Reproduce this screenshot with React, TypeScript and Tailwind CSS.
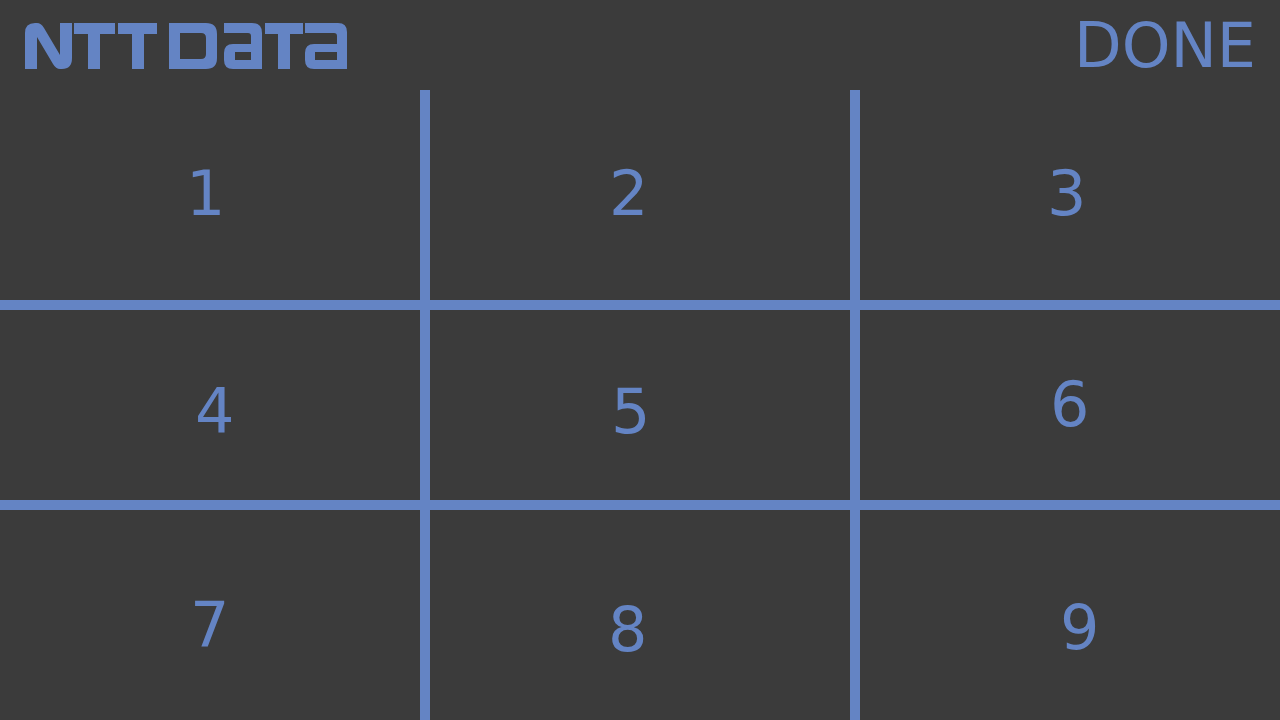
import React from 'react';

const font = "font-['DejaVu_Sans',sans-serif]";

// svg origin sits at page (20,20)
const Logo = () => (
  <svg width="330" height="54" viewBox="0 0 330 54" fill="#6484c4" className="block">
    <path d="M5 49V13Q5 3 15 3H17Q21 3 24 8L40 35V3H52V38Q52 49 42 49H40Q36 49 33 44L17 17V49Z" />
    <path d="M54 3H95V14H80V49H68V14H54Z" />
    <path d="M98 3H137V14H124V49H112V14H98Z" />
    <path fillRule="evenodd" d="M149 3H186Q197 3 197 14V38Q197 49 186 49H149ZM160 13V39H181Q186 39 186 34V18Q186 13 181 13Z" />
    <path fillRule="evenodd" d="M204 3H232Q242 3 242 13V49H213Q204 49 204 40V33Q204 24 213 24H231V16Q231 13 228 13H204ZM215 32V40H231V32Z" />
    <path d="M245 3H283V14H270V49H258V14H245Z" />
    <path fillRule="evenodd" d="M285 3H318Q327 3 327 12V49H294Q285 49 285 40V33Q285 24 294 24H317V16Q317 13 314 13H285ZM295 32V40H317V32Z" />
  </svg>
);

const cells = [
  { label: '1', cls: 'w-[430px] h-[220px] border-r-[10px] border-b-[10px] pl-[186px] pt-[66px]' },
  { label: '2', cls: 'w-[430px] h-[220px] border-r-[10px] border-b-[10px] pl-[179px] pt-[66px]' },
  { label: '3', cls: 'w-[420px] h-[220px] border-b-[10px] pl-[187px] pt-[66px]' },
  { label: '4', cls: 'w-[430px] h-[200px] border-r-[10px] border-b-[10px] pl-[195px] pt-[64px]' },
  { label: '5', cls: 'w-[430px] h-[200px] border-r-[10px] border-b-[10px] pl-[181px] pt-[64px]' },
  { label: '6', cls: 'w-[420px] h-[200px] border-b-[10px] pl-[190px] pt-[57px]' },
  { label: '7', cls: 'w-[430px] h-[210px] border-r-[10px] pl-[190px] pt-[77px]' },
  { label: '8', cls: 'w-[430px] h-[210px] border-r-[10px] pl-[178px] pt-[82px]' },
  { label: '9', cls: 'w-[420px] h-[210px] pl-[200px] pt-[80px]' },
];

export default function App() {
  return (
    <div className={`w-[1280px] h-[720px] overflow-hidden bg-[#3b3b3b] text-[#6484c4] ${font}`}>
      <div className="h-[90px] flex justify-between pl-5 pr-[24px] pt-[4px]">
        <div className="pt-[16px]">
          <Logo />
        </div>
        <span className="text-[62px] leading-[84px]">DONE</span>
      </div>
      <div className="flex flex-wrap w-[1280px]">
        {cells.map((c) => (
          <div key={c.label} className={`border-[#6484c4] text-[62px] leading-[76px] ${c.cls}`}>
            {c.label}
          </div>
        ))}
      </div>
    </div>
  );
}
